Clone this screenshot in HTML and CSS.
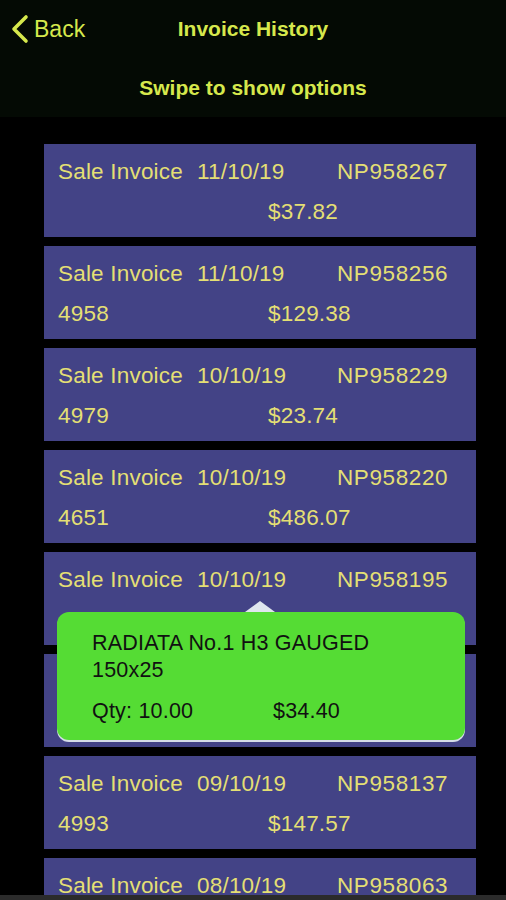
FILE: index.html
```html
<!DOCTYPE html>
<html lang="en">
<head>
  <meta charset="UTF-8">
  <meta name="viewport" content="width=device-width, initial-scale=1.0">
  <title>Invoice History</title>
  <link rel="stylesheet" href="styles.css">
</head>
<body>
  <header id="topbar">
    <div class="nav">
      <a class="back" href="#">
        <svg width="20" height="30" viewBox="0 0 20 30"><path d="M16 3 L4 15 L16 27" fill="none" stroke="currentColor" stroke-width="3.6" stroke-linecap="round" stroke-linejoin="round"/></svg>
        <span>Back</span>
      </a>
      <h1>Invoice History</h1>
    </div>
    <p class="hint">Swipe to show options</p>
  </header>

  <main id="list">
    <div class="card">
      <span class="type">Sale Invoice</span><span class="date">11/10/19</span><span class="no">NP958267</span>
      <span class="ref"></span><span class="amount">$37.82</span>
    </div>
    <div class="card">
      <span class="type">Sale Invoice</span><span class="date">11/10/19</span><span class="no">NP958256</span>
      <span class="ref">4958</span><span class="amount">$129.38</span>
    </div>
    <div class="card">
      <span class="type">Sale Invoice</span><span class="date">10/10/19</span><span class="no">NP958229</span>
      <span class="ref">4979</span><span class="amount">$23.74</span>
    </div>
    <div class="card">
      <span class="type">Sale Invoice</span><span class="date">10/10/19</span><span class="no">NP958220</span>
      <span class="ref">4651</span><span class="amount">$486.07</span>
    </div>
    <div class="card">
      <span class="type">Sale Invoice</span><span class="date">10/10/19</span><span class="no">NP958195</span>
      <span class="ref"></span><span class="amount"></span>
    </div>
    <div class="card">
      <span class="type"></span><span class="date"></span><span class="no"></span>
      <span class="ref"></span><span class="amount"></span>
    </div>
    <div class="card">
      <span class="type">Sale Invoice</span><span class="date">09/10/19</span><span class="no">NP958137</span>
      <span class="ref">4993</span><span class="amount">$147.57</span>
    </div>
    <div class="card">
      <span class="type">Sale Invoice</span><span class="date">08/10/19</span><span class="no">NP958063</span>
      <span class="ref"></span><span class="amount"></span>
    </div>

    <div class="popup">
      <div class="arrow"></div>
      <div class="item">RADIATA No.1 H3 GAUGED<br>150x25</div>
      <div class="line">
        <span class="qty">Qty: 10.00</span>
        <span class="price">$34.40</span>
      </div>
    </div>
  </main>

  <div id="bottombar"></div>
</body>
</html>
```

FILE: styles.css
```css
:root {
  --head-bg: #040a04;
  --head-text: #d6e84c;
  --card-bg: #434386;
  --card-text: #e4df74;
  --popup-bg: #55dc34;
}
* { box-sizing: border-box; margin: 0; padding: 0; }
html, body { height: 100%; }
body {
  font-family: 'Liberation Sans', Arial, sans-serif;
  background: #000;
  width: 506px;
  height: 900px;
  display: flex;
  flex-direction: column;
  overflow: hidden;
}
#topbar {
  background: var(--head-bg);
  color: var(--head-text);
  height: 117px;
  flex-shrink: 0;
}
.nav {
  position: relative;
  height: 58px;
  display: flex;
  align-items: center;
  justify-content: center;
}
.back {
  position: absolute;
  left: 10px;
  top: 14px;
  display: flex;
  align-items: center;
  gap: 4px;
  color: var(--head-text);
  text-decoration: none;
  font-size: 23px;
}
.nav h1 {
  font-size: 21px;
  font-weight: 700;
  margin-top: -1px;
}
.hint {
  text-align: center;
  font-size: 21px;
  font-weight: 700;
  line-height: 60px;
}
#list {
  position: relative;
  flex: 1;
  overflow: hidden;
  padding: 27px 0 0 44px;
  display: flex;
  flex-direction: column;
  gap: 9px;
}
.card {
  flex-shrink: 0;
  width: 432px;
  height: 93px;
  background: var(--card-bg);
  color: var(--card-text);
  font-size: 22.5px;
  letter-spacing: 0.2px;
  padding: 8px 0 5px 14px;
  display: grid;
  grid-template-columns: 139px 71px 69px 1fr;
  grid-auto-rows: 40px;
  align-items: center;
  white-space: nowrap;
}
.type { grid-column: 1; }
.date { grid-column: 2 / 4; }
.no { grid-column: 4; letter-spacing: 0.6px; }
.ref { grid-column: 1; }
.amount { grid-column: 3 / 5; }
.popup {
  position: absolute;
  left: 57px;
  top: 495px;
  width: 408px;
  height: 128px;
  background: var(--popup-bg);
  border-radius: 12px;
  box-shadow: 0 2px 0 #d6dee8;
  padding: 18px 0 0 35px;
  color: #111;
  font-size: 21.5px;
  letter-spacing: 0.2px;
}
.arrow {
  position: absolute;
  left: 188px;
  top: -11px;
  width: 0;
  height: 0;
  border-left: 15px solid transparent;
  border-right: 15px solid transparent;
  border-bottom: 11px solid #dfe6ee;
}
.item { line-height: 27px; }
.line {
  display: flex;
  line-height: 27px;
  margin-top: 14px;
}
.qty { width: 181px; }
#bottombar {
  height: 5px;
  background: #2b2b2b;
  flex-shrink: 0;
}
```
